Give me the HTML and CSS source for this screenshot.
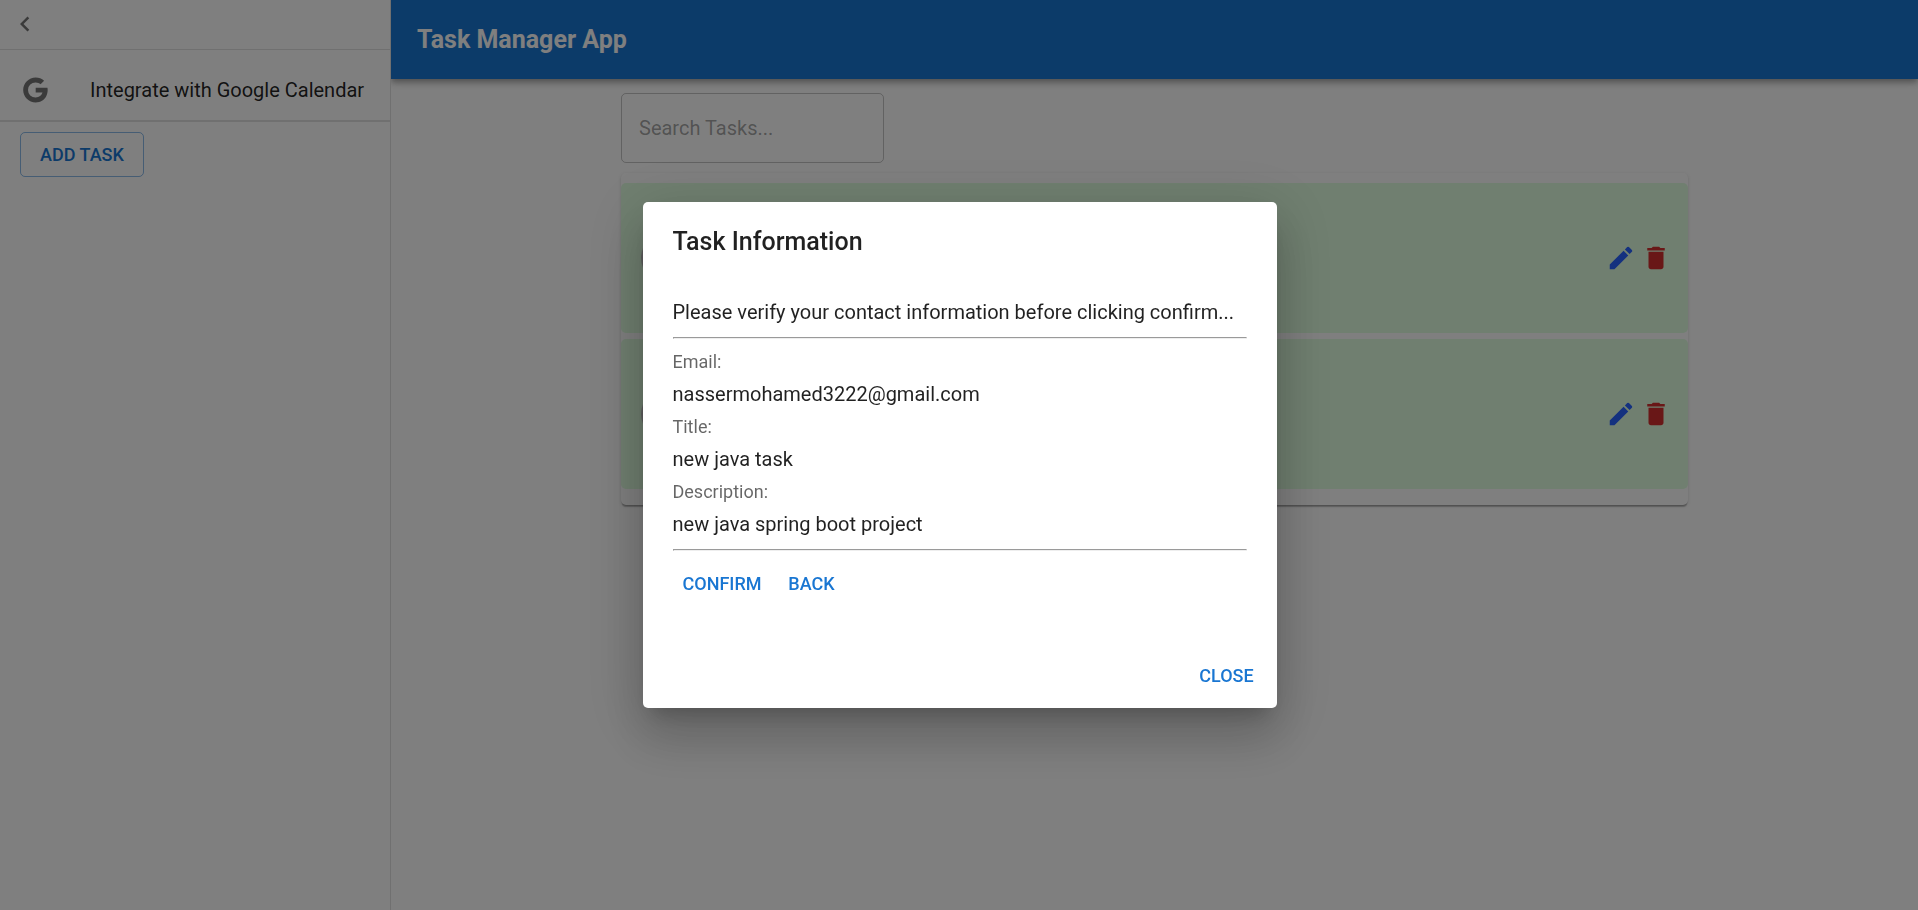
FILE: index.html
```html
<!DOCTYPE html>
<html lang="en">
<head>
<meta charset="utf-8">
<meta name="viewport" content="width=device-width, initial-scale=1">
<title>Task Manager App</title>
<link rel="stylesheet" href="styles.css">
</head>
<body>
<svg class="sprite" aria-hidden="true">
  <symbol id="edit" viewBox="0 0 24 24"><path d="M3 17.25V21h3.75L17.81 9.94l-3.75-3.75L3 17.25zM20.71 7.04c.39-.39.39-1.02 0-1.41l-2.34-2.34a.9959.9959 0 0 0-1.41 0l-1.83 1.83 3.75 3.75 1.83-1.83z"/></symbol>
  <symbol id="trash" viewBox="0 0 24 24"><path d="M6 19c0 1.1.9 2 2 2h8c1.1 0 2-.9 2-2V7H6v12zM19 4h-3.500l-1-1h-5l-1 1H5v2h14V4z"/></symbol>
</svg>
<div class="app">
  <aside class="sidebar">
    <div class="sidebar-head">
      <button class="icon-button" type="button" aria-label="Close menu">
        <svg class="icon" viewBox="0 0 24 24"><path d="M15.41 7.41 14 6l-6 6 6 6 1.410-1.410L10.830 12z"/></svg>
      </button>
    </div>
    <nav class="sidebar-nav">
      <a class="nav-item" href="#calendar">
        <svg class="icon" viewBox="0 0 24 24" aria-hidden="true"><path d="M12.545 10.239v3.821h5.445c-.712 2.315-2.647 3.972-5.445 3.972a6.033 6.033 0 1 1 0-12.064c1.498 0 2.866.549 3.921 1.453l2.814-2.814A9.969 9.969 0 0 0 12.545 2C7.021 2 2.543 6.477 2.543 12s4.478 10 10.002 10c8.396 0 10.249-7.850 9.426-11.748l-9.426-.013z"/></svg>
        <span>Integrate with Google Calendar</span>
      </a>
    </nav>
    <button class="button button-outlined" type="button">ADD TASK</button>
  </aside>
  <div class="page">
    <header class="appbar"><h1 class="appbar-title">Task Manager App</h1></header>
    <main class="content">
      <input class="search" type="text" placeholder="Search Tasks..." aria-label="Search Tasks">
      <ul class="tasks">
        <li class="task">
          <span class="avatar"></span>
          <button class="icon-button edit" type="button" aria-label="Edit task"><svg class="icon"><use href="#edit"/></svg></button>
          <button class="icon-button delete" type="button" aria-label="Delete task"><svg class="icon"><use href="#trash"/></svg></button>
        </li>
        <li class="task">
          <span class="avatar"></span>
          <button class="icon-button edit" type="button" aria-label="Edit task"><svg class="icon"><use href="#edit"/></svg></button>
          <button class="icon-button delete" type="button" aria-label="Delete task"><svg class="icon"><use href="#trash"/></svg></button>
        </li>
      </ul>
    </main>
  </div>
</div>
<div class="backdrop">
  <section class="dialog" role="dialog" aria-modal="true" aria-labelledby="dialog-title">
    <h2 class="dialog-title" id="dialog-title">Task Information</h2>
    <div class="dialog-content">
      <p class="lead">Please verify your contact information before clicking confirm...</p>
      <hr class="rule">
      <dl class="details">
        <dt>Email:</dt><dd>nassermohamed3222@gmail.com</dd>
        <dt>Title:</dt><dd>new java task</dd>
        <dt>Description:</dt><dd>new java spring boot project</dd>
      </dl>
      <hr class="rule">
      <div class="step-actions">
        <button class="button" type="button">CONFIRM</button>
        <button class="button" type="button">BACK</button>
      </div>
    </div>
    <footer class="dialog-actions"><button class="button" type="button">CLOSE</button></footer>
  </section>
</div>
</body>
</html>
```
FILE: styles.css
```css
* { box-sizing: border-box; }
body {
  margin: 0;
  font: 400 20px/30px Roboto, "Liberation Sans", sans-serif;
  color: rgba(0, 0, 0, 0.87);
  background: #fff;
}
h1, h2, p, ul, dl, dd { margin: 0; padding: 0; }
.sprite { display: none; }
.icon { display: block; width: 30px; height: 30px; fill: currentColor; }

.icon-button {
  padding: 0;
  border: 0;
  background: none;
  color: rgba(0, 0, 0, 0.54);
  cursor: pointer;
}
.button {
  min-width: 80px;
  padding: 7px 10px;
  border: 0;
  border-radius: 5px;
  background: none;
  font: 500 18px/31px Roboto, "Liberation Sans", sans-serif;
  color: #1976d2;
  cursor: pointer;
}
.button-outlined {
  align-self: flex-start;
  margin: 10px 20px;
  padding: 6px 19px;
  border: 1px solid rgba(25, 118, 210, 0.5);
}

.app { display: flex; min-height: 100vh; }
.sidebar {
  display: flex;
  flex-direction: column;
  flex: none;
  width: 391px;
  border-right: 1px solid rgba(0, 0, 0, 0.12);
  background: #fff;
  z-index: 1;
}
.sidebar-head {
  display: flex;
  padding: 9px 10px 10px;
  border-bottom: 1px solid rgba(0, 0, 0, 0.12);
}
.sidebar-nav {
  padding-top: 10px;
  border-bottom: 2px solid rgba(0, 0, 0, 0.12);
}
.nav-item {
  display: flex;
  align-items: center;
  gap: 40px;
  padding: 15px 20px;
  color: inherit;
  text-decoration: none;
  white-space: nowrap;
}
.nav-item .icon { fill: rgba(0, 0, 0, 0.54); }

.page { flex: 1; min-width: 0; }
.appbar {
  padding: 20px 26px;
  background: #1976d2;
  color: #fff;
  box-shadow: 0 3px 5px -1px rgba(0, 0, 0, 0.2), 0 5px 6px rgba(0, 0, 0, 0.14), 0 1px 13px rgba(0, 0, 0, 0.12);
}
.appbar-title { font-size: 25px; line-height: 39px; font-weight: 700; }
.content {
  display: flex;
  flex-direction: column;
  align-items: flex-start;
  gap: 10px;
  max-width: 1067px;
  margin: 0 auto;
  padding-top: 14px;
}
.search {
  width: 263px;
  height: 70px;
  padding: 0 17px;
  border: 1px solid rgba(0, 0, 0, 0.23);
  border-radius: 5px;
  background: none;
  font: inherit;
}
.search::placeholder { color: rgba(0, 0, 0, 0.37); opacity: 1; }
.tasks {
  display: flex;
  flex-direction: column;
  gap: 6px;
  width: 100%;
  padding: 10px 0 16px;
  border-radius: 5px;
  list-style: none;
  box-shadow: 0 3px 1px -1px rgba(0, 0, 0, 0.2), 0 1px 1px rgba(0, 0, 0, 0.14), 0 1px 4px rgba(0, 0, 0, 0.12);
}
.task {
  display: flex;
  align-items: center;
  gap: 5px;
  padding: 50px 17px 50px 20px;
  border-radius: 5px;
  background: #e0ffe0;
}
.avatar {
  width: 50px;
  height: 50px;
  margin-right: auto;
  border-radius: 50%;
  background: #bdbdbd;
}
.edit { color: #2962ff; }
.delete { color: #d32f2f; }

.backdrop {
  position: fixed;
  inset: 0;
  z-index: 10;
  display: flex;
  align-items: center;
  justify-content: center;
  padding-left: 1px;
  background: rgba(0, 0, 0, 0.5);
}
.dialog {
  min-width: 634px;
  border-radius: 5px;
  background: #fff;
  box-shadow: 0 14px 19px -9px rgba(0, 0, 0, 0.2), 0 30px 48px 4px rgba(0, 0, 0, 0.14), 0 11px 58px 10px rgba(0, 0, 0, 0.12);
}
.dialog-title { padding: 20px 30px; font-size: 25px; line-height: 40px; font-weight: 500; }
.dialog-content { padding: 15px 30px 37px; }
.rule { margin: 10px 0 8px; }
.details dt { font-size: 18px; line-height: 30px; color: rgba(0, 0, 0, 0.6); }
.details dd { line-height: 35px; }
.details + .rule { margin: 7px 0 10px; }
.step-actions { display: flex; }
.dialog-actions { display: flex; justify-content: flex-end; padding: 10px; }
```
